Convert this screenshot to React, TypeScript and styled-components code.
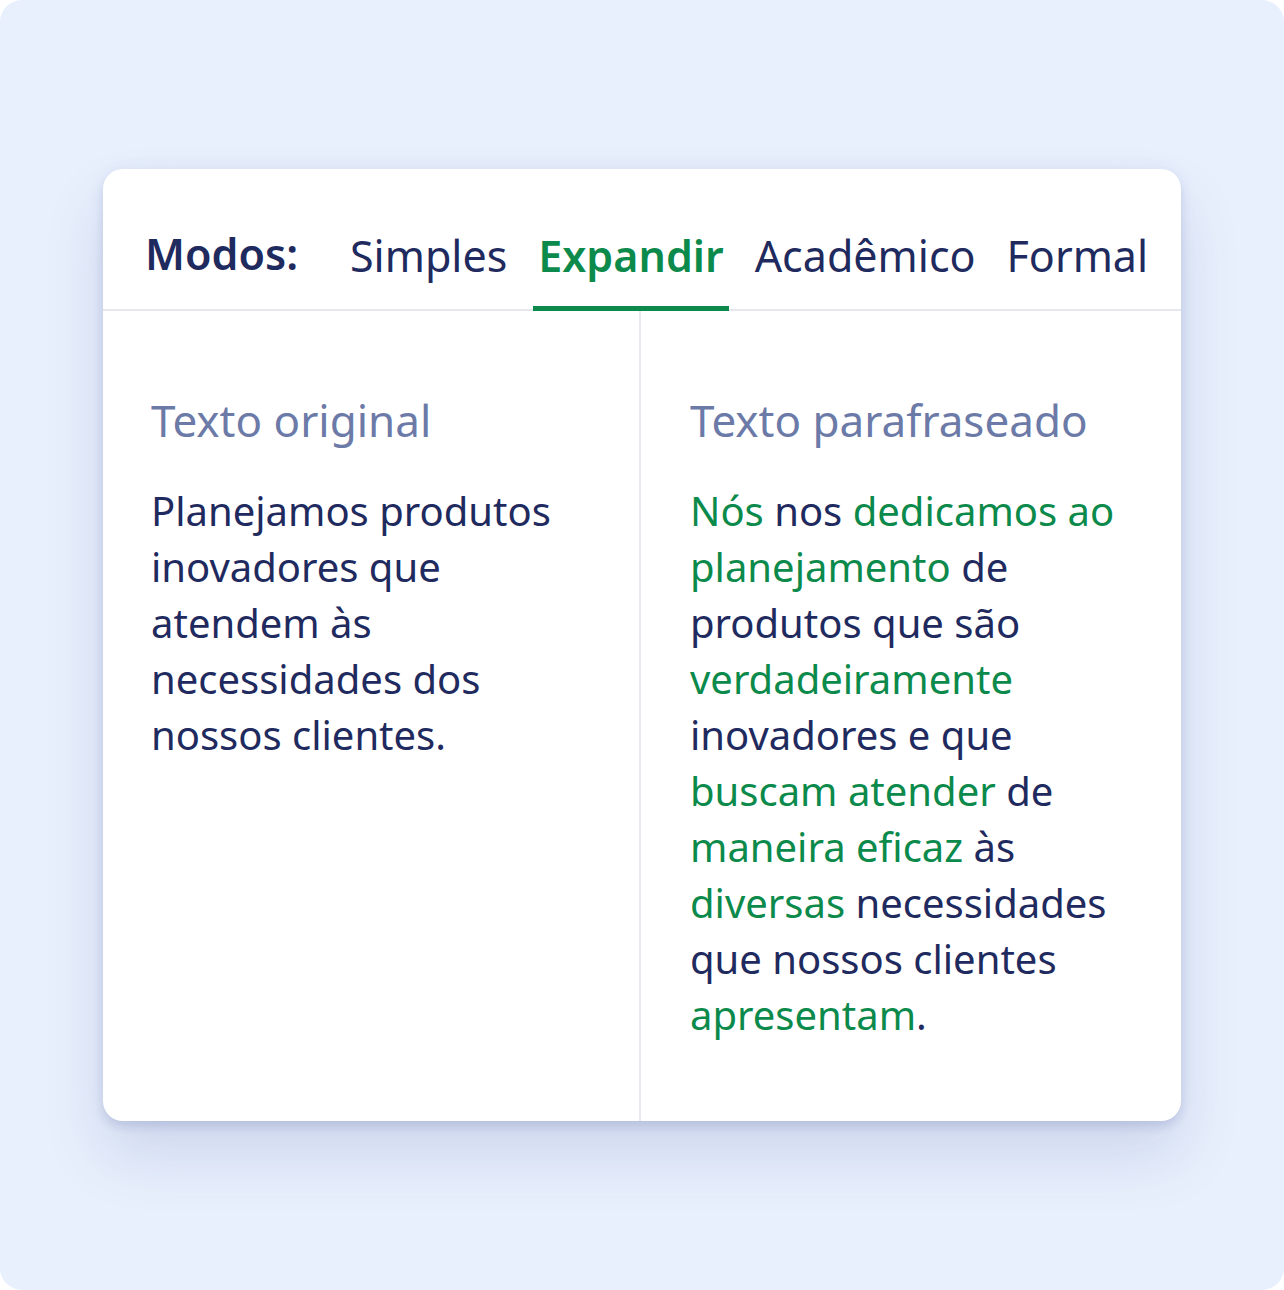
import React, { FC } from "react";
import styled, { createGlobalStyle } from "styled-components";

const GlobalStyle = createGlobalStyle`
    html, body {
        margin: 0;
        padding: 0;
        background: #ffffff;
    }
    body {
        font-family: "Noto Sans", "Open Sans", sans-serif;
    }
`;

const Page = styled.div`
    width: 1284px;
    height: 1290px;
    box-sizing: border-box;
    padding: 169px 103px 0 103px;
    background: #e8f0fd;
    border-radius: 22px;
`;

const Card = styled.div`
    background: #ffffff;
    border-radius: 20px;
    overflow: hidden;
    box-shadow: 0 34px 60px rgba(70, 80, 150, 0.16), 0 6px 10px rgba(70, 80, 150, 0.14), 0 0 18px rgba(70, 80, 150, 0.06);
`;

const Header = styled.div`
    display: flex;
    align-items: flex-end;
    padding: 56px 0 0 42px;
    border-bottom: 2px solid #e6e8ee;
`;

const Label = styled.div`
    font-size: 43px;
    line-height: 58px;
    font-weight: 600;
    color: #1f2a5e;
    padding-bottom: 26px;
    margin-right: 47px;
`;

const Tab = styled.div<{ $active?: boolean }>`
    font-size: 43px;
    line-height: 58px;
    font-weight: ${p => (p.$active ? 600 : 400)};
    color: ${p => (p.$active ? "#0b8a4b" : "#1f2a5e")};
    padding: 0 5px 21px;
    margin-right: 21px;
    margin-bottom: -2px;
    border-bottom: 5px solid ${p => (p.$active ? "#0b8a4b" : "transparent")};
`;

const Columns = styled.div`
    display: grid;
    grid-template-columns: 536px 1fr;
`;

const Column = styled.div<{ $divider?: boolean }>`
    padding: 84px 48px 78px ${p => (p.$divider ? "49px" : "48px")};
    border-left: ${p => (p.$divider ? "2px solid #e8e9ee" : "none")};
`;

const Title = styled.div`
    font-size: 44px;
    line-height: 50px;
    color: #6c7aa8;
    margin-bottom: 38px;
`;

const Body = styled.p`
    margin: 0;
    max-width: 441px;
    font-size: 40px;
    line-height: 56px;
    color: #1f2a5e;
`;

const Added = styled.span`
    color: #0b8a4b;
`;

const modes = ["Simples", "Expandir", "Acadêmico", "Formal"];

const App: FC = () => {
    return (
        <>
            <GlobalStyle />
            <Page>
                <Card>
                    <Header>
                        <Label>Modos:</Label>
                        {modes.map(m => (
                            <Tab key={m} $active={m === "Expandir"}>{m}</Tab>
                        ))}
                    </Header>
                    <Columns>
                        <Column>
                            <Title>Texto original</Title>
                            <Body>Planejamos produtos inovadores que atendem às necessidades dos nossos clientes.</Body>
                        </Column>
                        <Column $divider>
                            <Title>Texto parafraseado</Title>
                            <Body>
                                <Added>Nós</Added> nos <Added>dedicamos ao planejamento</Added> de produtos que são{" "}
                                <Added>verdadeiramente</Added> inovadores e que <Added>buscam atender</Added> de{" "}
                                <Added>maneira eficaz</Added> às <Added>diversas</Added> necessidades que nossos clientes{" "}
                                <Added>apresentam</Added>.
                            </Body>
                        </Column>
                    </Columns>
                </Card>
            </Page>
        </>
    );
};

export default App;
